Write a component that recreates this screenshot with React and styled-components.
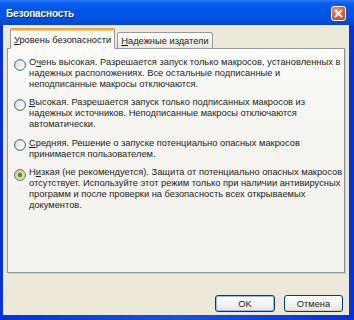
import React from "react";
import styled, { createGlobalStyle } from "styled-components";

const Global = createGlobalStyle`
  html, body { margin: 0; padding: 0; background: #ffffff; }
  body { width: 354px; height: 320px; overflow: hidden; }
`;

const Frame = styled.div`
  width: 354px;
  height: 320px;
  box-sizing: border-box;
  display: flex;
  flex-direction: column;
  background: linear-gradient(90deg, #0831d9 0%, #1651e0 50%, #0831d9 100%);
  font-family: "Liberation Sans", Arial, sans-serif;
  color: #1a1a1a;
`;

const TitleBar = styled.div`
  height: 25px;
  flex: none;
  display: flex;
  align-items: center;
  justify-content: space-between;
  padding: 0 8px 0 6px;
  background: linear-gradient(180deg, #2e7bf5 0%, #0a5ff0 12%, #0055e6 40%, #0153e3 70%, #0446d0 100%);
`;

const Title = styled.span`
  color: #ffffff;
  font-weight: bold;
  font-size: 10px;
  letter-spacing: -0.1px;
  text-shadow: 1px 1px 0 #0a2a8a;
  margin-top: 2px;
`;

const CloseButton = styled.div`
  width: 15px;
  height: 15px;
  box-sizing: border-box;
  border: 1px solid #ffffff;
  border-radius: 3px;
  background: radial-gradient(circle at 35% 30%, #f0a080 0%, #e0603a 45%, #c8401f 100%);
  display: flex;
  align-items: center;
  justify-content: center;
  margin-top: 2px;
`;

const Body = styled.div`
  flex: 1;
  margin: 0 5px 5px 3px;
  background: #ece9d8;
  display: flex;
  flex-direction: column;
  padding: 3px 4px 0 4px;
`;

const TabRow = styled.div`
  display: flex;
  align-items: flex-end;
  gap: 2px;
  padding-left: 3px;
  position: relative;
  z-index: 1;
  margin-bottom: -1px;
`;

const Tab = styled.div`
  box-sizing: border-box;
  height: ${(p) => (p.$active ? "21px" : "17px")};
  width: ${(p) => p.$w}px;
  border: 1px solid #919b9c;
  border-bottom: ${(p) => (p.$active ? "1px solid #fbfbf9" : "1px solid #919b9c")};
  border-top: ${(p) => (p.$active ? "2px solid #f1a44a" : "1px solid #919b9c")};
  border-radius: 2px 2px 0 0;
  background: ${(p) =>
    p.$active ? "#fbfbf9" : "linear-gradient(180deg, #ffffff 0%, #f4f3ee 60%, #e8e6dc 100%)"};
  font-size: 9.3px;
  display: flex;
  align-items: center;
  justify-content: center;
  padding-top: ${(p) => (p.$active ? "1px" : "0")};
  white-space: nowrap;
  box-shadow: ${(p) => (p.$active ? "inset 0 1px 0 #ffd277" : "none")};
`;

const Panel = styled.div`
  box-sizing: border-box;
  width: 338px;
  height: 225px;
  border: 1px solid #919b9c;
  border-right-color: #8a9192;
  background: linear-gradient(180deg, #fbfbf9 0%, #f5f4ef 40%, #f3f2ec 100%);
  padding: 8px 6px 0 6px;
  display: flex;
  flex-direction: column;
  gap: 8px;
  box-shadow: 1px 1px 0 #d0cec2;
`;

const Option = styled.div`
  display: flex;
  align-items: flex-start;
  gap: 3px;
`;

const RadioBox = styled.div`
  width: 12px;
  height: 12px;
  flex: none;
  margin-top: -0.5px;
`;

const Text = styled.div`
  font-size: 9.3px;
  line-height: 10.8px;
  white-space: nowrap;
  color: #1e1e1e;
`;

const Line = styled.div``;

const Key = styled.span`
  text-decoration: underline;
  text-underline-offset: 1px;
`;

const ButtonRow = styled.div`
  display: flex;
  justify-content: flex-end;
  gap: 9px;
  margin-top: 22px;
  padding-right: 2px;
`;

const Button = styled.div`
  box-sizing: border-box;
  width: ${(p) => p.$w}px;
  height: 17px;
  border: 1px solid #003c74;
  border-radius: 3px;
  background: linear-gradient(180deg, #ffffff 0%, #f4f4f0 50%, #e6e4dc 100%);
  box-shadow: ${(p) => (p.$default ? "inset 0 0 0 1px #9db8e8" : "inset 0 -1px 0 #d6d0c5")};
  font-size: 9.3px;
  display: flex;
  align-items: center;
  justify-content: center;
  color: #1e1e1e;
`;

function Radio({ checked }) {
  return (
    <RadioBox>
      <svg width="12" height="12" viewBox="0 0 12 12">
        <defs>
          <linearGradient id="rg" x1="0" y1="0" x2="1" y2="1">
            <stop offset="0" stopColor="#dcdad1" />
            <stop offset="1" stopColor="#ffffff" />
          </linearGradient>
        </defs>
        <circle cx="6" cy="6" r="5.4" fill="url(#rg)" stroke="#2a5d8e" strokeWidth="0.9" />
        {checked && (
          <>
            <circle cx="6" cy="6" r="4.2" fill="none" stroke="#f8c44e" strokeWidth="1.2" />
            <circle cx="6" cy="6" r="2.4" fill="#2aa52a" />
          </>
        )}
      </svg>
    </RadioBox>
  );
}

const options = [
  {
    lines: [
      [<>О<Key>ч</Key>ень высокая. Разрешается запуск только макросов, установленных в</>],
      ["надежных расположениях. Все остальные подписанные и"],
      ["неподписанные макросы отключаются."],
    ],
  },
  {
    lines: [
      [<><Key>В</Key>ысокая. Разрешается запуск только подписанных макросов из</>],
      ["надежных источников. Неподписанные макросы отключаются"],
      ["автоматически."],
    ],
  },
  {
    lines: [
      [<><Key>С</Key>редняя. Решение о запуске потенциально опасных макросов</>],
      ["принимается пользователем."],
    ],
  },
  {
    checked: true,
    lines: [
      [<>Н<Key>и</Key>зкая (не рекомендуется). Защита от потенциально опасных макросов</>],
      ["отсутствует. Используйте этот режим только при наличии антивирусных"],
      ["программ и после проверки на безопасность всех открываемых"],
      ["документов."],
    ],
  },
];

export default function App() {
  return (
    <>
      <Global />
      <Frame>
        <TitleBar>
          <Title>Безопасность</Title>
          <CloseButton>
            <svg width="9" height="9" viewBox="0 0 9 9">
              <path d="M1.5 1.5 L7.5 7.5 M7.5 1.5 L1.5 7.5" stroke="#ffffff" strokeWidth="1.8" strokeLinecap="square" />
            </svg>
          </CloseButton>
        </TitleBar>
        <Body>
          <TabRow>
            <Tab $active $w={105}>
              <span><Key>У</Key>ровень безопасности</span>
            </Tab>
            <Tab $w={96}>
              <span><Key>Н</Key>адежные издатели</span>
            </Tab>
          </TabRow>
          <Panel>
            {options.map((o, i) => (
              <Option key={i}>
                <Radio checked={o.checked} />
                <Text>
                  {o.lines.map((l, j) => (
                    <Line key={j}>{l}</Line>
                  ))}
                </Text>
              </Option>
            ))}
          </Panel>
          <ButtonRow>
            <Button $w={60} $default>OK</Button>
            <Button $w={59}>Отмена</Button>
          </ButtonRow>
        </Body>
      </Frame>
    </>
  );
}
